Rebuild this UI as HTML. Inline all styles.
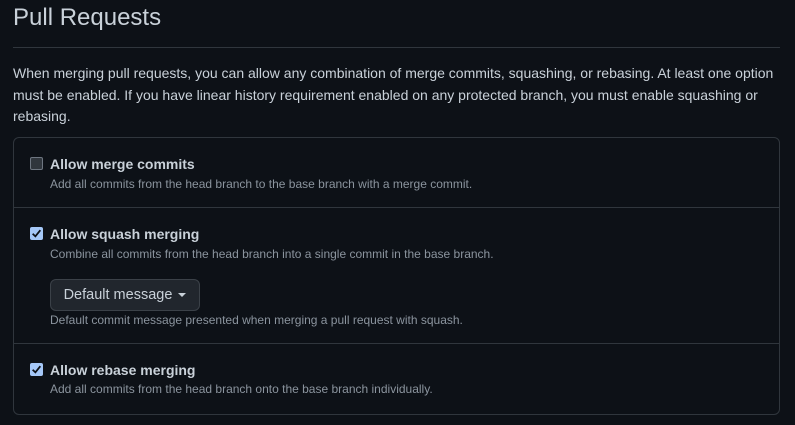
<!DOCTYPE html><html><head><style>
body{margin:0;background:#0d1117;font-family:"Liberation Sans",sans-serif;color:#c9d1d9;width:795px;height:425px;overflow:hidden;position:relative}
.a{position:absolute;white-space:nowrap}
h1{position:absolute;left:13px;top:4px;margin:0;font-weight:400;font-size:24px;color:#c9d1d9}
.hr{position:absolute;left:13px;width:767px;top:47px;border-top:1px solid #30363d}
p{position:absolute;left:13px;top:63px;width:770px;margin:0;font-size:14px;line-height:21.5px}
.box{position:absolute;left:13px;top:137px;width:765px;height:276px;border:1px solid #30363d;border-radius:6px}
.div{position:absolute;left:14px;width:765px;border-top:1px solid #30363d}
.t{font-weight:700;font-size:14px;left:50px}
.d{font-size:12px;color:#8b949e;left:50px}
.cb{position:absolute;left:30px;width:13px;height:13px;border-radius:2px;box-sizing:border-box}
.un{border:1px solid #6e7681;background:#30363d}
.ch{background:#a5c8f8}
.ch svg{position:absolute;left:1px;top:1px}
.btn{position:absolute;left:50px;top:279px;width:150px;height:32px;border:1px solid #3b4148;border-radius:6px;background:#21262d;box-sizing:border-box;font-size:14.5px;line-height:30px;text-align:center}
</style></head><body>
<h1>Pull Requests</h1><div class="hr"></div>
<p>When merging pull requests, you can allow any combination of merge commits, squashing, or rebasing. At least one option must be enabled. If you have linear history requirement enabled on any protected branch, you must enable squashing or rebasing.</p>
<div class="box"></div>
<div class="cb un" style="top:157px"></div>
<div class="a t" style="top:156px">Allow merge commits</div>
<div class="a d" style="top:177px">Add all commits from the head branch to the base branch with a merge commit.</div>
<div class="div" style="top:207px"></div>
<div class="cb ch" style="top:227px"><svg width="11" height="11" viewBox="0 0 10 10"><path d="M1.5 5.2L4 7.6L8.5 2" stroke="#0d1117" stroke-width="1.6" fill="none"/></svg></div>
<div class="a t" style="top:226px">Allow squash merging</div>
<div class="a d" style="top:247px">Combine all commits from the head branch into a single commit in the base branch.</div>
<div class="btn">Default message <span style="display:inline-block;border-left:4px solid transparent;border-right:4px solid transparent;border-top:4px solid #c9d1d9;vertical-align:middle;margin-left:2px"></span></div>
<div class="a d" style="top:313px">Default commit message presented when merging a pull request with squash.</div>
<div class="div" style="top:343px"></div>
<div class="cb ch" style="top:363px"><svg width="11" height="11" viewBox="0 0 10 10"><path d="M1.5 5.2L4 7.6L8.5 2" stroke="#0d1117" stroke-width="1.6" fill="none"/></svg></div>
<div class="a t" style="top:362px">Allow rebase merging</div>
<div class="a d" style="top:382px">Add all commits from the head branch onto the base branch individually.</div>
</body></html>
